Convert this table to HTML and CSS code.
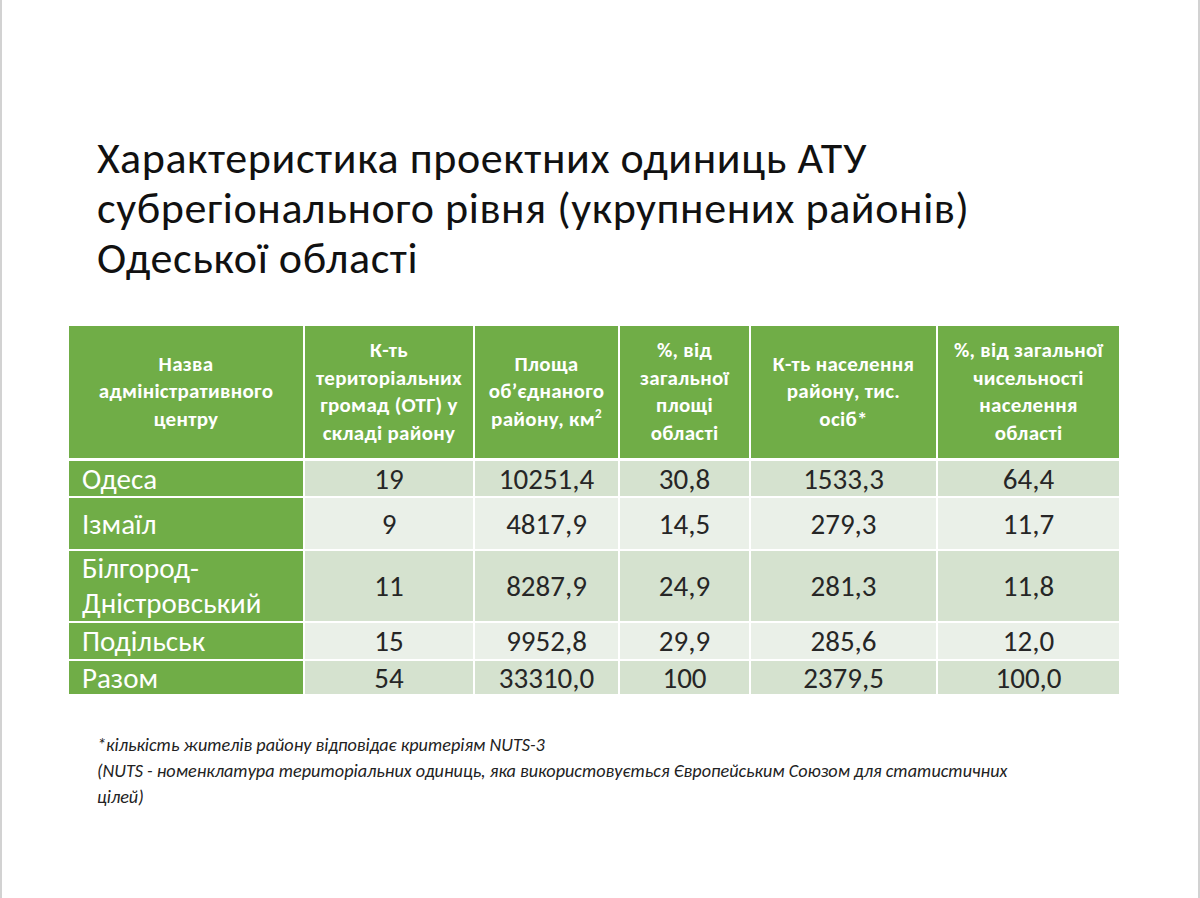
FILE: index.html
```html
<!DOCTYPE html>
<html lang="uk">
<head>
<meta charset="utf-8">
<title>Характеристика проектних одиниць АТУ</title>
<link rel="stylesheet" href="styles.css">
</head>
<body>
<div class="slide">
  <h1 class="title">Характеристика проектних одиниць АТУ<br>субрегіонального рівня (укрупнених районів)<br>Одеської області</h1>
  <table class="data">
    <colgroup>
      <col class="c1"><col class="c2"><col class="c3"><col class="c4"><col class="c5"><col class="c6">
    </colgroup>
    <thead>
      <tr class="head">
        <th>Назва<br>адміністративного<br>центру</th>
        <th>К-ть<br>територіальних<br>громад (ОТГ) у<br>складі району</th>
        <th>Площа<br>об’єднаного<br>району, км<sup>2</sup></th>
        <th>%, від<br>загальної<br>площі<br>області</th>
        <th>К-ть населення<br>району, тис.<br>осіб*</th>
        <th>%, від загальної<br>чисельності<br>населення<br>області</th>
      </tr>
    </thead>
    <tbody>
      <tr class="dark r1"><td class="name">Одеса</td><td>19</td><td>10251,4</td><td>30,8</td><td>1533,3</td><td>64,4</td></tr>
      <tr class="light r2"><td class="name">Ізмаїл</td><td>9</td><td>4817,9</td><td>14,5</td><td>279,3</td><td>11,7</td></tr>
      <tr class="dark r3"><td class="name">Білгород-<br>Дністровський</td><td>11</td><td>8287,9</td><td>24,9</td><td>281,3</td><td>11,8</td></tr>
      <tr class="light r4"><td class="name">Подільськ</td><td>15</td><td>9952,8</td><td>29,9</td><td>285,6</td><td>12,0</td></tr>
      <tr class="dark r5"><td class="name">Разом</td><td>54</td><td>33310,0</td><td>100</td><td>2379,5</td><td>100,0</td></tr>
    </tbody>
  </table>
  <div class="notes">
    <p>*кількість жителів району відповідає критеріям NUTS-3</p>
    <p>(NUTS - номенклатура територіальних одиниць, яка використовується Європейським Союзом для статистичних<br>цілей)</p>
  </div>
</div>
</body>
</html>
```

FILE: styles.css
```css
html, body {
  margin: 0;
  padding: 0;
  background: #ffffff;
}

.slide {
  box-sizing: border-box;
  width: 1200px;
  height: 898px;
  border-left: 2px solid #d2d2d2;
  border-right: 2px solid #d2d2d2;
  padding: 133px 0 0 65px;
  font-family: "Carlito", "Lato", "Open Sans", sans-serif;
  color: #1a1a1a;
}

.title {
  margin: 0 0 41px 30px;
  font-weight: 400;
  font-size: 44px;
  line-height: 50px;
  letter-spacing: 0.6px;
  color: #111111;
}

.data {
  border-collapse: collapse;
  table-layout: fixed;
  width: 1052px;
}

.c1 { width: 236px; }
.c2 { width: 170px; }
.c3 { width: 145px; }
.c4 { width: 131px; }
.c5 { width: 187px; }
.c6 { width: 183px; }

.data th,
.data td {
  border: 2px solid #ffffff;
  padding: 0;
  text-align: center;
  vertical-align: middle;
}

.head th {
  background: #70ad47;
  color: #ffffff;
  font-weight: 700;
  font-size: 21px;
  letter-spacing: 0.3px;
  line-height: 27.5px;
  height: 132px;
  border-bottom-width: 3px;
}

.head th sup {
  font-size: 13px;
  line-height: 0;
}

.data td {
  font-size: 29px;
  line-height: 32px;
  color: #262626;
}

.dark td { background: #d5e2cf; }
.light td { background: #eaf0e8; }

.data td.name {
  background: #70ad47;
  color: #ffffff;
  text-align: left;
  padding-left: 13px;
}

.r1 td { height: 35px; }
.r2 td { height: 51px; }
.r3 td { height: 70px; }
.r3 td.name { line-height: 35px; }
.r4 td { height: 36px; }
.r5 td { height: 33px; }

.notes {
  margin: 36px 0 0 30px;
  font-style: italic;
  font-size: 18.2px;
  line-height: 26px;
  color: #222222;
}

.notes p {
  margin: 0;
}
```
